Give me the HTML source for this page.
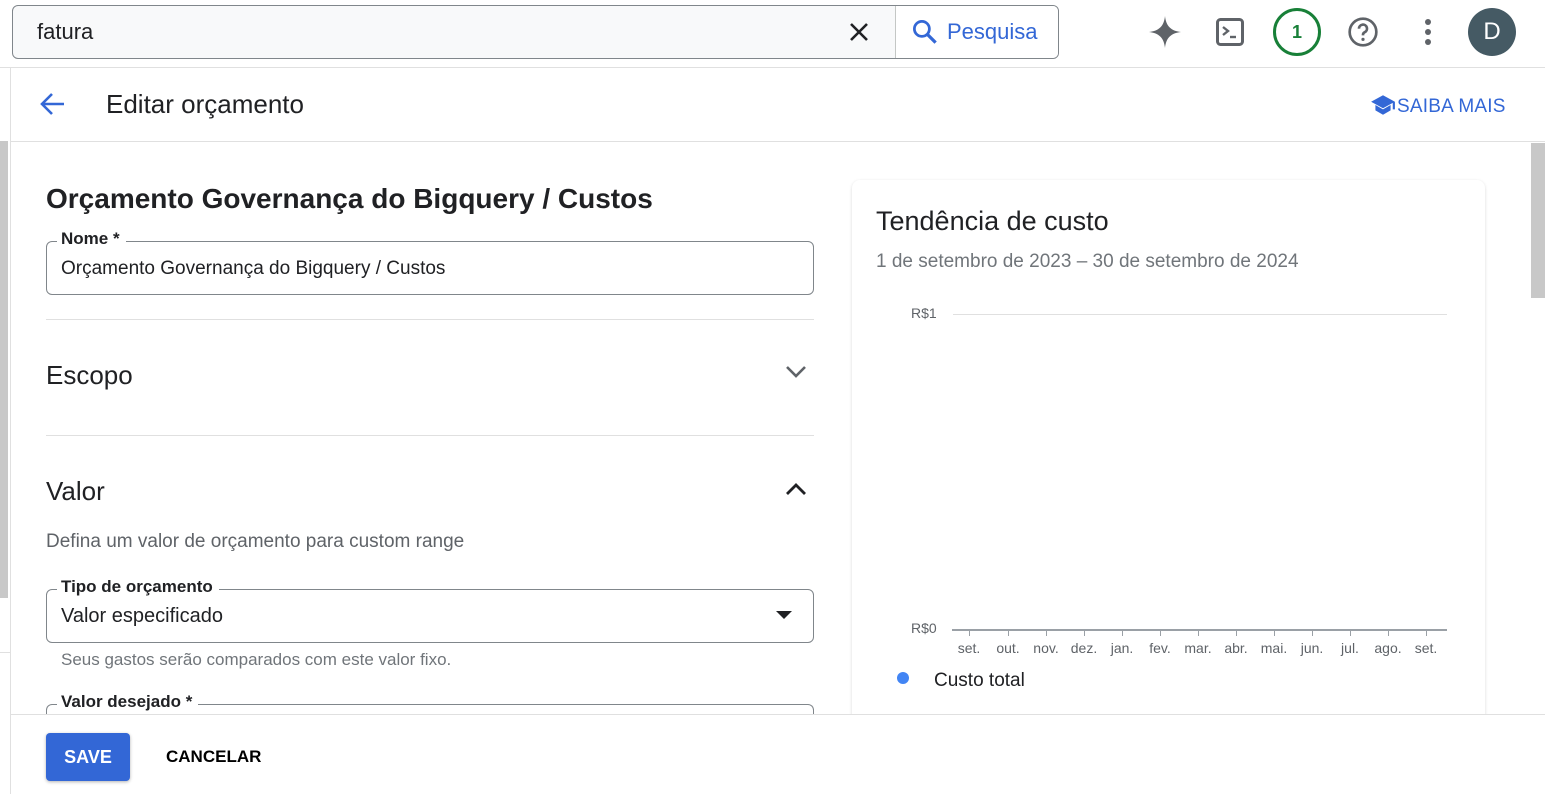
<!DOCTYPE html>
<html><head><meta charset="utf-8"><style>
*{box-sizing:border-box;margin:0;padding:0}
body{width:1545px;height:794px;position:relative;overflow:hidden;background:#fff;font-family:"Liberation Sans",Arial,sans-serif;color:#202124}
.a{position:absolute}
.hl{position:absolute;height:1px;background:#e0e0e0}
.field{position:absolute;border:1px solid #80868b;border-radius:6px}
.lbl{position:absolute;background:#fff;padding:0 6px 0 4px;font-size:17px;font-weight:bold;color:#202124;top:-13px;left:10px}
.tick{position:absolute;top:629px;width:1px;height:7px;background:#9aa0a6}
.mo{position:absolute;top:640px;font-size:14px;color:#5f6368;transform:translateX(-50%)}
</style></head><body>
<!-- top bar -->
<div class="a" style="left:12px;top:5px;width:1047px;height:54px;border:1px solid #80868b;border-radius:6px;background:#f8f9fa"></div>
<div class="a" style="left:895px;top:6px;width:1px;height:52px;background:#c4c7c5"></div>
<div class="a" style="left:896px;top:6px;width:162px;height:52px;background:#fff;border-radius:0 5px 5px 0"></div>
<div class="a" style="left:37px;top:19px;font-size:22px">fatura</div>
<svg class="a" style="left:847px;top:20px" width="24" height="24" viewBox="0 0 24 24"><path d="M4 4L20 20M20 4L4 20" stroke="#202124" stroke-width="2.6"/></svg>
<svg class="a" style="left:910px;top:17px" width="30" height="30" viewBox="0 0 24 24"><circle cx="9.5" cy="9.5" r="6" fill="none" stroke="#3367d6" stroke-width="2.2"/><path d="M14 14L20.5 20.5" stroke="#3367d6" stroke-width="2.6"/></svg>
<div class="a" style="left:947px;top:19px;font-size:22px;color:#3367d6">Pesquisa</div>
<svg class="a" style="left:1147px;top:14px" width="36" height="36" viewBox="0 0 36 36"><path d="M18 2C19 12 24 17 34 18C24 19 19 24 18 34C17 24 12 19 2 18C12 17 17 12 18 2Z" fill="#5f6368"/></svg>
<svg class="a" style="left:1216px;top:18px" width="30" height="28" viewBox="0 0 30 28"><rect x="1.5" y="1.5" width="25" height="25" rx="3" fill="none" stroke="#5f6368" stroke-width="3"/><path d="M7 9L12 13L7 17" stroke="#5f6368" stroke-width="2.4" fill="none"/><path d="M14 19H20" stroke="#5f6368" stroke-width="2.4"/></svg>
<div class="a" style="left:1273px;top:8px;width:48px;height:48px;border:3px solid #188038;border-radius:50%;text-align:center;line-height:42px;font-size:18px;font-weight:bold;color:#188038">1</div>
<svg class="a" style="left:1347px;top:16px" width="32" height="32" viewBox="0 0 24 24"><circle cx="12" cy="12" r="10" fill="none" stroke="#5f6368" stroke-width="2"/><path d="M9 9.5a3 3 0 1 1 4.2 2.7c-.8.4-1.2 1-1.2 1.8v.5" fill="none" stroke="#5f6368" stroke-width="2"/><circle cx="12" cy="17.5" r="1.2" fill="#5f6368"/></svg>
<div class="a" style="left:1425px;top:19px;width:6px;height:6px;border-radius:50%;background:#5f6368;box-shadow:0 10px 0 #5f6368,0 20px 0 #5f6368"></div>
<div class="a" style="left:1468px;top:8px;width:48px;height:48px;border-radius:50%;background:#455a64;color:#fff;font-size:24px;text-align:center;line-height:48px">D</div>
<div class="hl" style="left:0;top:67px;width:1545px"></div>
<!-- left strip -->
<div class="a" style="left:10px;top:67px;width:1px;height:727px;background:#e0e0e0"></div>
<div class="a" style="left:0;top:141px;width:8px;height:457px;background:#c8c8c8"></div>
<div class="hl" style="left:0;top:652px;width:10px"></div>
<!-- header -->
<svg class="a" style="left:38px;top:91px" width="28" height="26" viewBox="0 0 28 26"><path d="M26 13H4M14 3L4 13L14 23" stroke="#3367d6" stroke-width="2.6" fill="none"/></svg>
<div class="a" style="left:106px;top:89px;font-size:26px">Editar orçamento</div>
<svg class="a" style="left:1370px;top:94px" width="26" height="22" viewBox="0 0 24 20"><path d="M12 1L1 7L12 13L21 8V14H23V7Z" fill="#3367d6"/><path d="M5 10V15L12 19L19 15V10L12 14Z" fill="#3367d6"/></svg>
<div class="a" style="left:1397px;top:96px;font-size:19px;color:#3367d6;letter-spacing:0.2px">SAIBA MAIS</div>
<div class="hl" style="left:11px;top:141px;width:1534px"></div>
<!-- right scrollbar -->
<div class="a" style="left:1531px;top:143px;width:14px;height:155px;background:#c8c8c8"></div>
<!-- form -->
<div class="a" style="left:46px;top:183px;font-size:28px;font-weight:bold">Orçamento Governança do Bigquery / Custos</div>
<div class="field" style="left:46px;top:241px;width:768px;height:54px"><div class="lbl">Nome *</div></div>
<div class="a" style="left:61px;top:258px;font-size:19px">Orçamento Governança do Bigquery / Custos</div>
<div class="hl" style="left:46px;top:319px;width:768px"></div>
<div class="a" style="left:46px;top:360px;font-size:26px">Escopo</div>
<svg class="a" style="left:784px;top:362px" width="24" height="20" viewBox="0 0 24 20"><path d="M3 5L12 14L21 5" stroke="#5f6368" stroke-width="2.6" fill="none"/></svg>
<div class="hl" style="left:46px;top:435px;width:768px"></div>
<div class="a" style="left:46px;top:476px;font-size:26px">Valor</div>
<svg class="a" style="left:784px;top:479px" width="24" height="20" viewBox="0 0 24 20"><path d="M3 15L12 6L21 15" stroke="#202124" stroke-width="2.8" fill="none"/></svg>
<div class="a" style="left:46px;top:531px;font-size:19px;color:#5f6368">Defina um valor de orçamento para custom range</div>
<div class="field" style="left:46px;top:589px;width:768px;height:54px"><div class="lbl">Tipo de orçamento</div></div>
<div class="a" style="left:61px;top:605px;font-size:20px">Valor especificado</div>
<svg class="a" style="left:775px;top:610px" width="18" height="10" viewBox="0 0 18 10"><path d="M1 1H17L9 9Z" fill="#202124"/></svg>
<div class="a" style="left:61px;top:650px;font-size:17px;color:#70757a">Seus gastos serão comparados com este valor fixo.</div>
<div class="field" style="left:46px;top:704px;width:768px;height:40px;border-bottom:none"><div class="lbl">Valor desejado *</div></div>
<!-- card -->
<div class="a" style="left:852px;top:180px;width:633px;height:560px;border-radius:8px;box-shadow:0 1px 3px rgba(0,0,0,.15);background:#fff"></div>
<div class="a" style="left:876px;top:206px;font-size:27px">Tendência de custo</div>
<div class="a" style="left:876px;top:251px;font-size:19px;color:#70757a">1 de setembro de 2023 – 30 de setembro de 2024</div>
<div class="a" style="left:911px;top:305px;font-size:14px;color:#5f6368">R$1</div>
<div class="a" style="left:953px;top:314px;width:494px;height:1px;background:#e0e0e0"></div>
<div class="a" style="left:911px;top:620px;font-size:14px;color:#5f6368">R$0</div>
<div class="a" style="left:952px;top:629px;width:495px;height:2px;background:#9aa0a6"></div>
<div class="tick" style="left:969px"></div><div class="tick" style="left:1008px"></div><div class="tick" style="left:1046px"></div><div class="tick" style="left:1084px"></div><div class="tick" style="left:1122px"></div><div class="tick" style="left:1160px"></div><div class="tick" style="left:1198px"></div><div class="tick" style="left:1236px"></div><div class="tick" style="left:1274px"></div><div class="tick" style="left:1312px"></div><div class="tick" style="left:1350px"></div><div class="tick" style="left:1388px"></div><div class="tick" style="left:1426px"></div>
<div class="mo" style="left:969px">set.</div><div class="mo" style="left:1008px">out.</div><div class="mo" style="left:1046px">nov.</div><div class="mo" style="left:1084px">dez.</div><div class="mo" style="left:1122px">jan.</div><div class="mo" style="left:1160px">fev.</div><div class="mo" style="left:1198px">mar.</div><div class="mo" style="left:1236px">abr.</div><div class="mo" style="left:1274px">mai.</div><div class="mo" style="left:1312px">jun.</div><div class="mo" style="left:1350px">jul.</div><div class="mo" style="left:1388px">ago.</div><div class="mo" style="left:1426px">set.</div>
<div class="a" style="left:897px;top:672px;width:12px;height:12px;border-radius:50%;background:#4285f4"></div>
<div class="a" style="left:934px;top:670px;font-size:19px">Custo total</div>
<!-- footer -->
<div class="a" style="left:11px;top:714px;width:1534px;height:80px;background:#fff;border-top:1px solid #e0e0e0"></div>
<div class="a" style="left:46px;top:733px;width:84px;height:48px;background:#3367d6;border-radius:4px;box-shadow:0 1px 3px rgba(0,0,0,.3);color:#fff;font-weight:bold;font-size:18px;text-align:center;line-height:48px">SAVE</div>
<div class="a" style="left:166px;top:747px;font-size:17px;font-weight:bold;color:#000">CANCELAR</div>
</body></html>
